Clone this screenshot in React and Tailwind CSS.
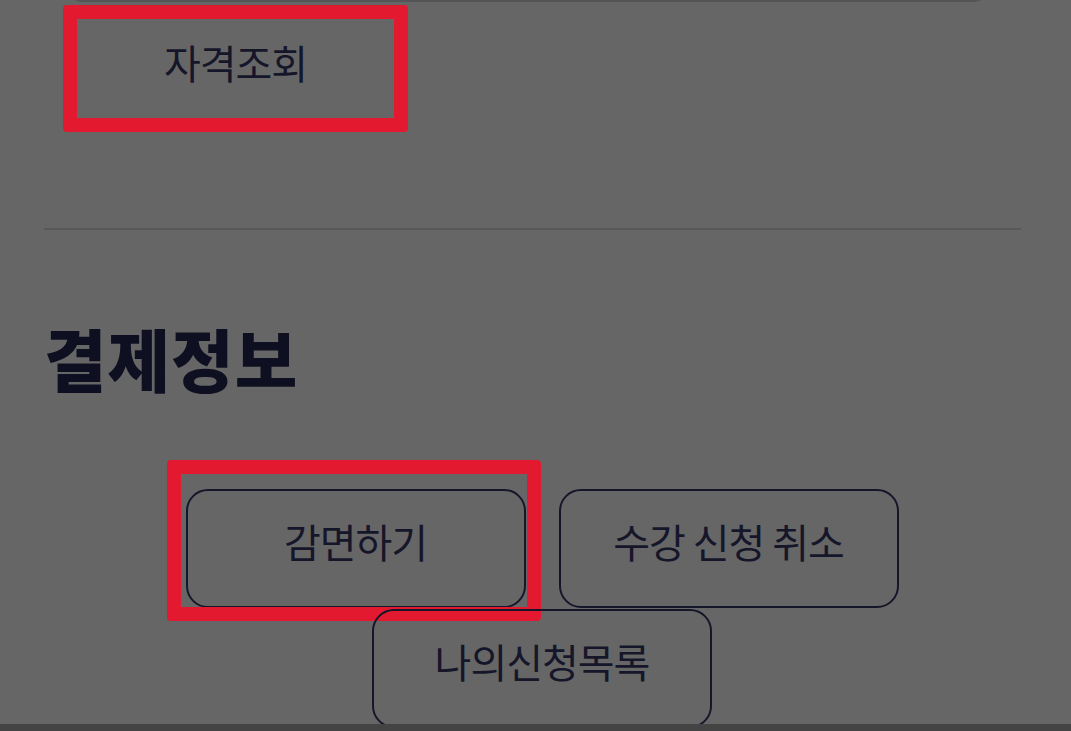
import React from "react";

const font = { fontFamily: '"Noto Sans CJK KR", "Noto Sans", sans-serif' };

const OutlineButton = ({ label, marked }) => (
  <div className="relative">
    <button className="w-[340px] h-[119px] pb-[15px] rounded-[22px] border-2 border-[#16162a] text-[40px] leading-none tracking-[-1px] text-[#16162a] flex items-center justify-center">
      {label}
    </button>
    {marked ? (
      <div className="absolute left-[-19px] top-[-29px] right-[-15px] bottom-[-13px] border-[14px] border-[#e3192f] rounded-[4px] pointer-events-none"></div>
    ) : null}
  </div>
);

export default function App() {
  return (
    <div
      style={font}
      className="w-full h-[731px] bg-[#666666] flex flex-col overflow-hidden"
    >
      <div className="flex-1 overflow-hidden">
        {/* input left over from the section above */}
        <div className="mx-[68px] mr-[83px] h-[40px] mt-[-38px] rounded-[14px] border-2 border-[#555558]"></div>

        {/* 자격조회 */}
        <div className="ml-[63px] mt-[3px] w-[345px] h-[127px] pb-[14px] border-[14px] border-[#e3192f] rounded-[4px] flex items-center justify-center">
          <span className="text-[40px] text-[#16162a] leading-none tracking-[-1px]">자격조회</span>
        </div>

        <div className="mx-[44px] mt-[96px] mr-[50px] h-[2px] bg-[#585858]"></div>

        <div className="pl-[44px] pr-[31px]">
          <h2 className="mt-[94px] text-[68px] font-black leading-none text-[#0f0f22] tracking-[1px]">
            결제정보
          </h2>

          <div className="mt-[97px] flex flex-wrap justify-center gap-x-[33px] gap-y-[1px]">
            <OutlineButton label="감면하기" marked />
            <OutlineButton label="수강 신청 취소" />
            <OutlineButton label="나의신청목록" />
          </div>
        </div>
      </div>
      <div className="h-[7px] bg-[#444444]"></div>
    </div>
  );
}
